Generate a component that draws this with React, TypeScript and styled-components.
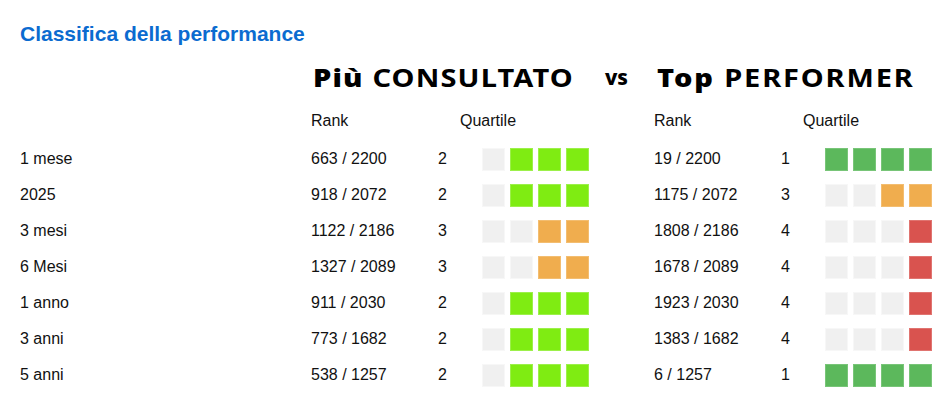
import styled, { createGlobalStyle } from 'styled-components';

type Level = 'empty' | 'lime' | 'green' | 'orange' | 'red';

const colors: Record<Level, { fill: string; edge: string }> = {
  empty: { fill: '#f0f0f0', edge: '#f7f7f7' },
  lime: { fill: '#7fec12', edge: '#9cf04a' },
  green: { fill: '#5cb85c', edge: '#78c578' },
  orange: { fill: '#f0ad4e', edge: '#f3bd70' },
  red: { fill: '#d9534f', edge: '#e07470' },
};

type Row = {
  label: string;
  popular: { rank: string; q: number };
  top: { rank: string; q: number };
};

const rows: Row[] = [
  { label: '1 mese', popular: { rank: '663 / 2200', q: 2 }, top: { rank: '19 / 2200', q: 1 } },
  { label: '2025', popular: { rank: '918 / 2072', q: 2 }, top: { rank: '1175 / 2072', q: 3 } },
  { label: '3 mesi', popular: { rank: '1122 / 2186', q: 3 }, top: { rank: '1808 / 2186', q: 4 } },
  { label: '6 Mesi', popular: { rank: '1327 / 2089', q: 3 }, top: { rank: '1678 / 2089', q: 4 } },
  { label: '1 anno', popular: { rank: '911 / 2030', q: 2 }, top: { rank: '1923 / 2030', q: 4 } },
  { label: '3 anni', popular: { rank: '773 / 1682', q: 2 }, top: { rank: '1383 / 1682', q: 4 } },
  { label: '5 anni', popular: { rank: '538 / 1257', q: 2 }, top: { rank: '6 / 1257', q: 1 } },
];

// quartile 1 = all four filled, 4 = only the last one
const squaresFor = (q: number, palette: 'popular' | 'top'): Level[] => {
  const filled = 5 - q;
  let color: Level = 'green';
  if (palette === 'popular') {
    color = q <= 2 ? 'lime' : q === 3 ? 'orange' : 'red';
  } else {
    color = q <= 2 ? 'green' : q === 3 ? 'orange' : 'red';
  }
  return [0, 1, 2, 3].map((i) => (i >= 4 - filled ? color : 'empty'));
};

const GlobalStyle = createGlobalStyle`
  body {
    margin: 0;
    background: #ffffff;
    font-family: "Liberation Sans", Arial, sans-serif;
    color: #111111;
  }
`;

const Wrapper = styled.div`
  width: 952px;
  height: 404px;
  box-sizing: border-box;
  padding: 22px 20px 0;
  overflow: hidden;
`;

const Title = styled.h2`
  margin: 0;
  font-size: 21px;
  line-height: 24px;
  font-weight: bold;
  color: #0b6bd0;
`;

const Table = styled.div`
  display: grid;
  grid-template-columns: 291px 127px 44px 172px 127px 44px 172px;
  grid-template-rows: 49px 38px;
  grid-auto-rows: 36px;
  margin-top: 8px;
`;

const HeadingRow = styled.div`
  grid-column: 2 / 5;
  display: flex;
  align-items: center;
  height: 46px;
  padding-left: 2px;
  padding-right: 26px;
`;

const HeadingRowRight = styled(HeadingRow)`
  grid-column: 5 / 8;
  padding-left: 3px;
`;

const Heading = styled.div<{ $spacing: number }>`
  font-family: "Noto Sans", "DejaVu Sans", sans-serif;
  font-size: 25px;
  font-weight: 700;
  color: #000;
  white-space: nowrap;
  letter-spacing: ${({ $spacing }) => $spacing}px;
  transform: scaleX(1.16);
  transform-origin: left center;
  b {
    font-weight: 900;
  }
`;

const Versus = styled.div`
  margin-left: auto;
  font-family: "Noto Sans", "DejaVu Sans", sans-serif;
  font-size: 21px;
  font-weight: 800;
  color: #000;
`;

const Spacer = styled.div`
  grid-column: 1 / 2;
`;

const Cell = styled.div<{ $span?: number }>`
  display: flex;
  align-items: center;
  font-size: 16px;
  white-space: nowrap;
  ${({ $span }) => ($span ? `grid-column: span ${$span};` : '')}
`;

const HeadCell = styled(Cell)`
  padding-bottom: 3px;
`;

const QuartileHead = styled(HeadCell)`
  padding-left: 22px;
`;

const Squares = styled.div`
  display: flex;
  align-items: center;
  gap: 5px;
`;

const Square = styled.div<{ $level: Level }>`
  width: 23px;
  height: 23px;
  box-sizing: border-box;
  background: ${({ $level }) => colors[$level].fill};
  border: 1px solid ${({ $level }) => colors[$level].edge};
`;

const QuartileSquares = ({ q, palette }: { q: number; palette: 'popular' | 'top' }) => (
  <Squares>
    {squaresFor(q, palette).map((lvl, i) => (
      <Square key={i} $level={lvl} />
    ))}
  </Squares>
);

export default function App() {
  return (
    <Wrapper>
      <GlobalStyle />
      <Title>Classifica della performance</Title>
      <Table>
        <Spacer />
        <HeadingRow>
          <Heading $spacing={1}>
            <b>Più</b> CONSULTATO
          </Heading>
          <Versus>vs</Versus>
        </HeadingRow>
        <HeadingRowRight>
          <Heading $spacing={1.6}>
            <b>Top</b> PERFORMER
          </Heading>
        </HeadingRowRight>

        <Spacer />
        <HeadCell>Rank</HeadCell>
        <QuartileHead $span={2}>Quartile</QuartileHead>
        <HeadCell>Rank</HeadCell>
        <QuartileHead $span={2}>Quartile</QuartileHead>

        {rows.map((r) => (
          <>
            <Cell key={r.label}>{r.label}</Cell>
            <Cell>{r.popular.rank}</Cell>
            <Cell>{r.popular.q}</Cell>
            <Cell>
              <QuartileSquares q={r.popular.q} palette="popular" />
            </Cell>
            <Cell>{r.top.rank}</Cell>
            <Cell>{r.top.q}</Cell>
            <Cell>
              <QuartileSquares q={r.top.q} palette="top" />
            </Cell>
          </>
        ))}
      </Table>
    </Wrapper>
  );
}
